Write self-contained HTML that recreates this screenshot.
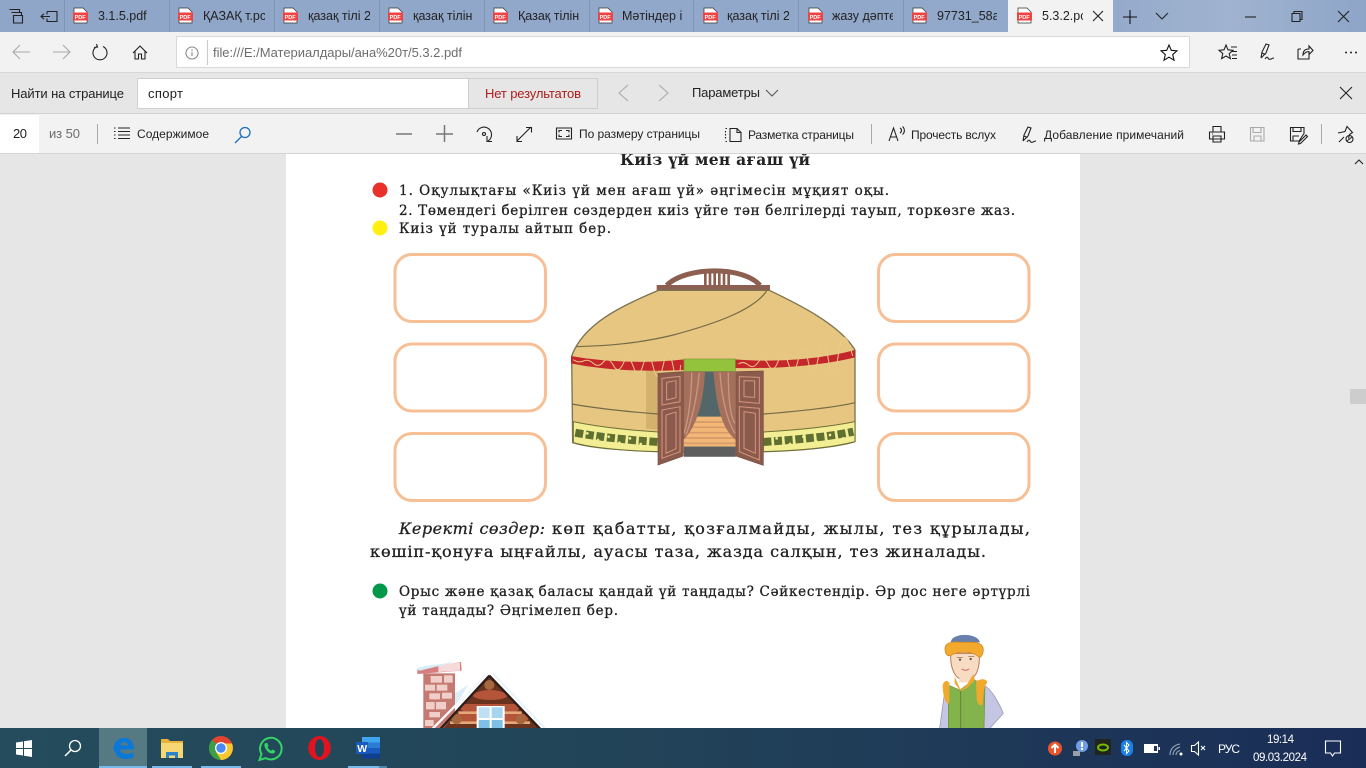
<!DOCTYPE html>
<html><head><meta charset="utf-8"><title>5.3.2.pdf</title>
<style>
html,body{margin:0;padding:0;width:1366px;height:768px;overflow:hidden;background:#e6e6e6}
svg{display:block;position:absolute;left:0;top:0}
.u{font-family:"Liberation Sans","DejaVu Sans",sans-serif;font-size:12px;fill:#222}
.f{font-size:13px}
.p{font-family:"DejaVu Serif","Liberation Serif",serif;font-size:13.5px;fill:#222;stroke:#222;stroke-width:.3}
.i{fill:none;stroke:#222;stroke-width:1.1}
</style></head><body>
<svg width="1366" height="768" viewBox="0 0 1366 768" xmlns="http://www.w3.org/2000/svg">
<defs>
<linearGradient id="tb" x1="0" x2="1"><stop offset="0" stop-color="#8fa6c9"/><stop offset=".8" stop-color="#93a9cb"/><stop offset=".9" stop-color="#a0b3d0"/><stop offset="1" stop-color="#8ea5c8"/></linearGradient>
<linearGradient id="task" x1="0" x2="1"><stop offset="0" stop-color="#244c5c"/><stop offset=".45" stop-color="#224458"/><stop offset="1" stop-color="#1a2d57"/></linearGradient>
<g id="pdf"><path d="M0 0h9l4 4v11H0z" fill="#fff" stroke="#333" stroke-width=".7"/><rect x="-1" y="4.500" width="15" height="8" fill="#ef4444"/><text x=".6" y="11" font-family="Liberation Sans,sans-serif" font-size="5.500" font-weight="bold" fill="#fff">PDF</text></g>
</defs>

<!-- page area -->
<rect x="0" y="153" width="1366" height="575" fill="#e6e6e6"/>
<rect x="286" y="153" width="794" height="575" fill="#fff"/>
<rect x="1350" y="389" width="16" height="15" fill="#cdcdcd"/>
<path d="M1355 164l4-4 4 4" class="i" stroke="#555"/>

<!-- tabs -->
<rect width="1366" height="32" fill="url(#tb)"/>
<g stroke="#7f95b8"><path d="M64.500 0v32M169.500 0v32M274.500 0v32M379.500 0v32M484.500 0v32M589.500 0v32M693.500 0v32M798.500 0v32M903.500 0v32"/></g>
<rect x="1008" width="105" height="32" fill="#f2f2f2"/>
<g class="i"><path d="M9.500 9.500h10v2.500M11.500 12.500h10v2.500M13.500 15.500h9v7.500h-9z"/><path d="M47 11.500h10v10h-10v-3M47 11.500v3M41 16.500h9M44 13.800l-3 2.700 3 2.700"/></g>
<use href="#pdf" x="74" y="8"/><use href="#pdf" x="179" y="8"/><use href="#pdf" x="284" y="8"/><use href="#pdf" x="389" y="8"/><use href="#pdf" x="494" y="8"/><use href="#pdf" x="599" y="8"/><use href="#pdf" x="704" y="8"/><use href="#pdf" x="809" y="8"/><use href="#pdf" x="913" y="8"/><use href="#pdf" x="1018" y="8"/>
<g class="u" style="font-size:12.500px">
<text x="98" y="20">3.1.5.pdf</text>
<svg x="203" y="0" width="62" height="32"><text y="20">ҚАЗАҚ т.рс</text></svg>
<svg x="308" y="0" width="62" height="32"><text y="20">қазақ тілі 2</text></svg>
<svg x="413" y="0" width="61" height="32"><text y="20">қазақ тілін</text></svg>
<svg x="518" y="0" width="61" height="32"><text y="20">Қазақ тілін</text></svg>
<svg x="622" y="0" width="62" height="32"><text y="20">Мәтіндер і</text></svg>
<svg x="727" y="0" width="62" height="32"><text y="20">қазақ тілі 2</text></svg>
<svg x="832" y="0" width="61" height="32"><text y="20">жазу дәпте</text></svg>
<svg x="937" y="0" width="60" height="32"><text y="20">97731_58а</text></svg>
<svg x="1042" y="0" width="41" height="32"><text y="20">5.3.2.рс</text></svg>
</g>
<g class="i"><path d="M1093 11l10 10M1103 11l-10 10"/><path d="M1123 17h14M1130 10v14" stroke="#111"/><path d="M1156 13l6 6 6-6"/><path d="M1245 17h11"/><path d="M1292 13.500h8v8h-8zM1294 13.500v-2h8v8h-2"/><path d="M1338 11l11 11M1349 11l-11 11"/></g>

<!-- address bar -->
<rect y="32" width="1366" height="41" fill="#f2f2f2"/>
<path d="M0 72.500h1366" stroke="#d6d6d6"/>
<rect x="176.500" y="36.500" width="1013" height="31" fill="#fff" stroke="#d8d8d8"/>
<g fill="none" stroke-width="1.100">
<path d="M13 52h17M20 45l-7 7 7 7M53 52h17M63 45l7 7-7 7" stroke="#a8a8a8"/>
<path d="M97 46.500a7 7 0 1 0 6 0M96.500 44l1 3-3.500 .5" stroke="#222"/>
<path d="M133 53l7-7 7 7M135 51v8h3.500v-5h3v5h3.500v-8" stroke="#222"/>
<circle cx="192" cy="53" r="6" stroke="#888"/><path d="M192 52v4M192 49.500v1.500" stroke="#888"/>
<path d="M207.500 40v25" stroke="#ccc"/>
<path d="M1169 45l2.300 5.300 5.700.5-4.300 3.800 1.300 5.600-5-3-5 3 1.300-5.600-4.300-3.800 5.700-.5z" stroke="#111"/>
<path d="M1226 45l2 4.800 5 .5-3.800 3.300 1.200 5-4.400-2.600-4.400 2.600 1.200-5-3.800-3.300 5-.5zM1231 47h6M1232 51.500h5M1232 55h5M1232 58.500h5" stroke="#222"/>
<path d="M1261 58L1262 52 1266 44 1269 45 1266 53 1261 58M1262 53l3.500 1.500M1265 59q2-3 3-1t3 1 3-1" stroke="#222"/>
<path d="M1298 49h3M1298 49v10h11v-5M1303 55c0-4 2-6 6-6v-3l4 4.500-4 4v-3c-2 0-4 1-6 3.500z" stroke="#222"/>
</g>
<g fill="#222"><circle cx="1346" cy="52.500" r="1"/><circle cx="1351" cy="52.500" r="1"/><circle cx="1356" cy="52.500" r="1"/></g>
<text class="u f" x="213" y="57" style="fill:#6d6d6d" textLength="249">file:///E:/Материалдары/ана%20т/5.3.2.pdf</text>

<!-- find bar -->
<rect y="73" width="1366" height="40" fill="#e6e6e6"/>
<path d="M0 113.500h1366" stroke="#d0d0d0"/>
<rect x="137.500" y="78.500" width="460" height="30" fill="#fff" stroke="#cfcfcf"/>
<rect x="468.500" y="78.500" width="129" height="30" fill="#e6e6e6" stroke="#cfcfcf"/>
<text class="u f" x="11" y="98" textLength="113">Найти на странице</text>
<text class="u f" x="148" y="98" textLength="35">спорт</text>
<text class="u f" x="485" y="98" style="fill:#b01c1c" textLength="96">Нет результатов</text>
<text class="u f" x="692" y="97" textLength="68">Параметры</text>
<g fill="none" stroke-width="1.100"><path d="M628 85l-9 8 9 8M659 85l9 8-9 8" stroke="#aaa"/><path d="M766 90l6 6 6-6" stroke="#555"/><path d="M1340 87l12 12M1352 87l-12 12" stroke="#222"/></g>

<!-- pdf bar -->
<rect y="114" width="1366" height="39" fill="#f2f2f2"/>
<path d="M0 153.500h1366" stroke="#d4d4d4"/>
<rect y="115" width="39" height="38" fill="#fff"/>
<text class="u f" x="13" y="138" textLength="14">20</text>
<text class="u f" x="49" y="138" style="fill:#6d6d6d" textLength="31">из 50</text>
<path d="M97.500 124v20M871.500 124v20M1321.500 124v20" stroke="#aaa"/>
<g class="i"><path d="M118 128h12M118 131.500h12M118 135h12M118 138.500h12M114 128h1.500M114 131.500h1.500M114 135h1.500M114 138.500h1.500"/></g>
<text class="u" x="137" y="138" textLength="72">Содержимое</text>
<circle cx="245" cy="132.500" r="5" fill="none" stroke="#1b6fc2" stroke-width="1.300"/><path d="M241.500 136.500l-6.500 6.500" stroke="#1b6fc2" stroke-width="1.300"/>
<path d="M396 134h16M436 134h17M444.500 125v17" stroke="#777" stroke-width="1.500" fill="none"/>
<g class="i">
<path d="M477 132a7.500 7.500 0 1 1 11 9M487 136v5.500h5"/><circle cx="484" cy="134" r="1.500"/>
<path d="M517 141l14-14M517 136v5.500h5M526 127.500h5.500v5"/>
<path d="M556.500 128h15v11h-15z"/><path d="M559 132.500v-2h3M566 130.500h3v2M569 134.500v2h-3M562 136.500h-3v-2"/>
<path d="M730 128.500h7l4 4v9h-11zM737 128.500v4h4"/><path d="M725.500 128.500h2M725.500 141.500h2M725.500 131v9" stroke-dasharray="1.500 1.500"/>
<path d="M889 141l4.500-13 4.500 13M891 137h5M900 128c2 1 2 4 0 5M902.500 126.500c2.500 2 2.500 6 0 8"/>
<path d="M1023 141L1024 135 1028 127 1031 128 1028 136 1023 141M1024 136l3.500 1.500M1027 142q2-3 3-1t3 1 3-1"/>
<path d="M1209.500 132h15v7h-15zM1213 132v-5.500h8v5.500M1213 136h8v6h-8zM1212 134h1"/>
<g stroke="#aaa"><path d="M1250.500 127.500h13.500v13.500h-13.500zM1253 127.500v5h8v-5M1254 141v-5h7v5"/></g>
<path d="M1290.500 127.500h13.500v6l-5 7.500h-8.500zM1293 127.500v4h8v-4M1293 141v-5h6M1299 142l7-7 1.500 1.500-7 7-2 .5z"/>
<path d="M1339 142l5-5M1338 133l7-1.500 2-5 5.500 6-3 2-1 4"/><circle cx="1349.500" cy="139" r="3.500"/><path d="M1347 141l5-4"/>
</g>
<g class="u">
<text x="579" y="138" textLength="121">По размеру страницы</text>
<text x="748" y="139" textLength="106">Разметка страницы</text>
<text x="911" y="139" textLength="85">Прочесть вслух</text>
<text x="1044" y="139" textLength="140">Добавление примечаний</text>
</g>

<!-- document text -->
<svg x="0" y="154" width="1366" height="574" viewBox="0 154 1366 574">
<text class="p" x="620" y="165" style="font-size:15.500px;font-weight:bold;stroke-width:0" textLength="190">Киіз үй мен ағаш үй</text>
<text class="p" x="399" y="195" textLength="490">1. Оқулықтағы «Киіз үй мен ағаш үй» әңгімесін мұқият оқы.</text>
<text class="p" x="399" y="215" textLength="616">2. Төмендегі берілген сөздерден киіз үйге тән белгілерді тауып, торкөзге жаз.</text>
<text class="p" x="399" y="233" textLength="212">Киіз үй туралы айтып бер.</text>
<text class="p" x="399" y="534" style="font-size:16px;font-style:italic;" textLength="146">Керекті сөздер:</text>
<text class="p" x="552" y="534" style="font-size:16px" textLength="478">көп қабатты, қозғалмайды, жылы, тез құрылады,</text>
<text class="p" x="370" y="557" style="font-size:16px" textLength="616">көшіп-қонуға ыңғайлы, ауасы таза, жазда салқын, тез жиналады.</text>
<text class="p" x="399" y="596" textLength="631">Орыс және қазақ баласы қандай үй таңдады? Сәйкестендір. Әр дос неге әртүрлі</text>
<text class="p" x="399" y="615" textLength="219">үй таңдады? Әңгімелеп бер.</text>
<circle cx="380" cy="190" r="7.500" fill="#e8312a"/>
<circle cx="380" cy="228" r="7.500" fill="#fff012"/>
<circle cx="380" cy="591" r="7.500" fill="#00994a"/>
<g fill="none" stroke="#f6bf95" stroke-width="3">
<rect x="395" y="254.500" width="150.500" height="67" rx="17"/>
<rect x="395" y="344" width="150.500" height="67" rx="17"/>
<rect x="395" y="433.500" width="150.500" height="67" rx="17"/>
<rect x="878.500" y="254.500" width="150.500" height="67" rx="17"/>
<rect x="878.500" y="344" width="150.500" height="67" rx="17"/>
<rect x="878.500" y="433.500" width="150.500" height="67" rx="17"/>
</g>

<!-- yurt -->
<svg x="560" y="260" width="310" height="215" viewBox="0 0 930 645">
<path d="M320 76C380 18 550 18 600 76" fill="none" stroke="#8d5f50" stroke-width="15"/>
<g stroke="#8d5f50" stroke-width="8"><path d="M436 34v44M450 30v48M464 30v48M478 30v48M492 32v46M506 36v42"/></g>
<rect x="290" y="75" width="340" height="16" fill="#8d5f50"/>
<path d="M295 91C190 135 70 190 35 288L38 548C90 565 200 572 300 575H610C720 572 830 562 885 545V270C840 195 720 135 628 91Z" fill="#e6c680" stroke="#7c7350" stroke-width="4"/>
<path d="M258 330H295V510L258 505Z" fill="#d4b26e"/>
<path d="M620 93C580 150 470 190 340 225 230 252 130 258 48 260" fill="none" stroke="#736b48" stroke-width="3.500"/>
<path d="M35 432C110 445 200 455 295 462M610 462C700 455 810 445 885 428" fill="none" stroke="#736b48" stroke-width="3.500"/>
<!-- lower band -->
<path d="M40 485C110 500 200 510 295 516V575C190 572 100 565 40 548Z" fill="#f3ee94" stroke="#6e7236" stroke-width="3"/>
<path d="M610 516C720 510 810 500 885 485V545C820 562 720 572 610 575Z" fill="#f3ee94" stroke="#6e7236" stroke-width="3"/>
<g fill="none" stroke="#5f7030" stroke-width="24" stroke-dasharray="24 8"><path d="M46 518C110 530 200 540 295 546"/><path d="M610 546C720 538 810 530 880 515"/></g>
<g fill="#f3ee94"><circle cx="82" cy="520" r="4"/><circle cx="114" cy="540" r="4"/><circle cx="146" cy="530" r="4"/><circle cx="178" cy="548" r="4"/><circle cx="210" cy="535" r="4"/><circle cx="242" cy="552" r="4"/><circle cx="650" cy="535" r="4"/><circle cx="690" cy="552" r="4"/><circle cx="730" cy="530" r="4"/><circle cx="770" cy="545" r="4"/><circle cx="810" cy="525" r="4"/><circle cx="850" cy="535" r="4"/></g>
<!-- red band -->
<path d="M33 288C130 305 250 312 372 298V330C250 336 130 330 33 310Z" fill="#c4262b"/>
<path d="M526 298C650 308 780 298 885 270V292C780 318 650 326 526 324Z" fill="#c4262b"/>
<g fill="none" stroke="#eac985" stroke-width="3"><path d="M40 299Q55 310 70 303T100 310T130 306T160 316T190 310T220 320T250 313T280 322T310 314T340 322T362 315"/><path d="M535 312Q550 302 565 315T595 306T625 314T655 302T685 310T715 298T745 306T775 292T805 298T835 284T878 288"/></g>
<rect x="372" y="297" width="154" height="37" fill="#93c23c" stroke="#7c9a3a" stroke-width="2"/>
<!-- opening -->
<rect x="372" y="335" width="155" height="255" fill="#53676a"/>
<path d="M372 470H527V560H372Z" fill="#f2b777"/>
<g stroke="#d79a68" stroke-width="5"><path d="M372 486H527M372 502H527M372 518H527M372 534H527M372 550H527"/></g>
<rect x="372" y="560" width="155" height="30" fill="#5e5e5e"/>
<path d="M370 335H435C430 430 410 500 370 540Z" fill="#a4705c"/>
<path d="M527 335H460C470 430 480 500 527 540Z" fill="#a4705c"/>
<g fill="none" stroke="#c99680" stroke-width="4"><path d="M395 338C395 410 385 480 372 520M418 338C410 420 395 480 378 525M480 338C485 410 500 480 525 520M505 338C505 410 510 470 525 490"/></g>
<!-- doors -->
<path d="M294 340L370 335V588L294 615Z" fill="#8a5b4c" stroke="#7a5042" stroke-width="2"/>
<path d="M528 335L610 333V616L528 588Z" fill="#8a5b4c" stroke="#7a5042" stroke-width="2"/>
<g fill="none" stroke="#d6957e" stroke-width="3"><path d="M306 355L360 349V425L306 435ZM320 367L348 362V413L320 420ZM306 450L360 440V575L306 595ZM318 465L348 456V566L318 580Z"/><path d="M538 350L598 352V430L538 425ZM552 362L584 363V412L552 410ZM538 440L598 445V600L538 575ZM552 455L586 460V580L552 565Z"/></g>
</svg>

<!-- house -->
<svg x="400" y="630" width="160" height="100" viewBox="0 0 480 300">
<path d="M70 130H165V300H70Z" fill="#c47a70"/>
<g fill="#f0cfcb"><rect x="92" y="138" width="34" height="20"/><rect x="132" y="136" width="26" height="22"/><rect x="75" y="164" width="30" height="18"/><rect x="110" y="164" width="32" height="18"/><rect x="88" y="190" width="32" height="18"/><rect x="126" y="188" width="30" height="18"/><rect x="78" y="216" width="26" height="22"/><rect x="108" y="216" width="30" height="22"/><rect x="88" y="246" width="32" height="16"/><rect x="75" y="270" width="26" height="18"/></g>
<path d="M52 118L183 96 185 122 52 132Z" fill="#d77f80"/><path d="M115 105L180 98V122L115 126Z" fill="#f6d9d9"/>
<path d="M46 118C80 100 130 108 165 92L150 100 60 122Z" fill="#d6ecf7"/>
<path d="M165 190L205 165 165 230Z" fill="#dbeef8"/>
<path d="M268 135L130 295H415Z" fill="#6a3320"/>
<g fill="#b4553a"><path d="M218 195C240 175 300 175 322 195 325 215 220 215 218 195Z"/><rect x="182" y="222" width="175" height="22" rx="10"/><rect x="155" y="252" width="230" height="22" rx="10"/></g>
<g fill="#e6a878"><rect x="175" y="244" width="190" height="8"/><rect x="150" y="274" width="240" height="8"/></g>
<circle cx="268" cy="165" r="15" fill="#a8683f"/><circle cx="170" cy="268" r="15" fill="#a8683f"/><circle cx="362" cy="268" r="15" fill="#a8683f"/>
<rect x="230" y="228" width="84" height="72" fill="#fff"/>
<rect x="236" y="232" width="33" height="32" fill="#bfe0f3"/><rect x="275" y="232" width="33" height="32" fill="#a5d5ef"/><rect x="236" y="270" width="33" height="30" fill="#7fc1e6"/><rect x="275" y="270" width="33" height="30" fill="#7fc1e6"/>
<path d="M268 137L122 296M268 137L420 296" stroke="#2c1d1a" stroke-width="7" fill="none"/>
<path d="M262 130L98 296" stroke="#f4f9fd" stroke-width="7" fill="none"/>
<path d="M278 130L436 296" stroke="#e8f3fa" stroke-width="6" fill="none"/>
</svg>

<!-- boy -->
<svg x="920" y="625" width="100" height="105" viewBox="0 0 300 315">
<path d="M72 215L58 315H95V215Z" fill="#c5c6e4" stroke="#8e8eb0" stroke-width="2"/>
<path d="M190 180C215 190 240 240 250 265L205 315H180V190Z" fill="#c5c6e4" stroke="#8e8eb0" stroke-width="2"/>
<path d="M85 180L120 195 160 165 195 175 192 315H85Z" fill="#85b34b" stroke="#6c8f3d" stroke-width="2"/>
<path d="M122 198V315" stroke="#63813a" stroke-width="3"/>
<path d="M68 180C72 165 85 165 88 175L88 235C78 240 68 215 68 180Z" fill="#f0a92d"/>
<path d="M168 170C180 160 200 160 202 172 190 185 190 215 188 238 178 245 172 235 170 220Z" fill="#f0a92d"/>
<path d="M92 85C90 130 105 165 135 165 170 165 180 130 178 85Z" fill="#f7dbc3" stroke="#b97a58" stroke-width="3"/>
<path d="M118 145V172H160V145Z" fill="#f7dbc3"/>
<path d="M104 155L122 195 140 180 160 148 165 165 140 190 122 198 104 175Z" fill="#f0a92d"/>
<path d="M92 52C95 22 172 22 180 52Z" fill="#6a80ac"/>
<path d="M75 68C78 48 105 50 135 52 165 50 188 52 190 72 190 90 182 100 176 96 160 78 110 78 92 92 80 95 74 85 75 68Z" fill="#f3a92d" stroke="#c78320" stroke-width="2"/>
<path d="M110 97h18M145 95h18" stroke="#8a5d48" stroke-width="2"/><circle cx="120" cy="104" r="3.500" fill="#555"/><circle cx="152" cy="102" r="3.500" fill="#555"/>
<path d="M125 132c8 5 15 5 22 0" stroke="#c75f55" stroke-width="3" fill="none"/>
</svg>
</svg>

<!-- taskbar -->
<rect y="728" width="1366" height="40" fill="url(#task)"/>
<rect x="99" y="728" width="48" height="40" fill="#567a84"/>
<g fill="#76b9ed"><rect x="99" y="766" width="48" height="2"/><rect x="152" y="766" width="40" height="2"/><rect x="201" y="766" width="40" height="2"/><rect x="348" y="766" width="31" height="2"/></g><rect x="379" y="766" width="8" height="2" fill="#4c86a8"/>
<g fill="#fff"><path d="M16 742.500l7-1v6.500h-7zM24 741.300l8-1.300v8h-8zM16 749h7v6.500l-7-1zM24 749h8v8l-8-1.300z"/></g>
<circle cx="75" cy="746" r="5.500" fill="none" stroke="#fff" stroke-width="1.300"/><path d="M71 750l-6 6" stroke="#fff" stroke-width="1.500"/>
<!-- edge -->
<path d="M113.500 749c0-7 5-11 10.500-11 6.500 0 10 4.500 10 11.500h-14c.5 3 3 4.500 6 4.500 2.500 0 5.500-.6 7.500-1.800v5.300c-2 1-4.500 1.500-8 1.500-5 0-9-2.500-10-6.500-.8-2-2-1.500-2-3.500zm7-3.500h7.500c0-2-1.500-3.500-3.700-3.500s-3.800 1.500-3.800 3.500z" fill="#0a78d8"/>
<!-- explorer -->
<path d="M161 739h7l2 2h13v3h-22z" fill="#e8b33d"/><rect x="161" y="743" width="22" height="15" fill="#f7d774"/><path d="M166 758v-6h12v6h-3v-2.500h-6v2.500z" fill="#2b84c6"/>
<!-- chrome -->
<circle cx="221" cy="748" r="12" fill="#e2452f"/><path d="M221 748L210.600 754A12 12 0 0 0 221 760L227 749.500z" fill="#3a9f47"/><path d="M210.600 754A12 12 0 0 1 212 740L221 748z" fill="#3a9f47"/><path d="M221 760A12 12 0 0 0 232 743.500H221L216 752z" fill="#f7c92e"/><circle cx="221" cy="748" r="6" fill="#fff"/><circle cx="221" cy="748" r="4.700" fill="#4a8af0"/>
<!-- whatsapp -->
<path d="M259.500 760l2-6a10.800 10.800 0 1 1 4.200 4.100z" fill="none" stroke="#35d366" stroke-width="2"/><path d="M265.500 743c-1.500 1-1.500 3 0 5.500 2 3.500 4.500 5 7 5 1.500 0 2.700-1 2.700-2.500l-2.700-1.500-1.300 1.300c-1.500-.5-3-2-3.700-3.800l1-1.300-1.300-2.700z" fill="#35d366"/>
<!-- opera -->
<ellipse cx="319.500" cy="748" rx="11.300" ry="12" fill="#e0131f"/><ellipse cx="319.500" cy="748" rx="4.500" ry="9" fill="#1f4456"/>
<!-- word -->
<rect x="362" y="737" width="18" height="5.500" fill="#41a5ee"/><rect x="362" y="742.500" width="18" height="5.500" fill="#2b7cd3"/><rect x="362" y="748" width="18" height="5.500" fill="#185abd"/><rect x="362" y="753.500" width="18" height="5" fill="#103f91"/><rect x="356" y="742" width="12" height="12" fill="#185abd"/><text x="357.200" y="752" font-family="Liberation Sans,sans-serif" font-size="10.500" font-weight="bold" fill="#fff">W</text>
<!-- tray -->
<circle cx="1055" cy="748.500" r="7" fill="#e9542a"/><path d="M1055 753v-8M1051.500 748l3.500-3.500 3.500 3.500" stroke="#fff" stroke-width="2" fill="none"/>
<circle cx="1082" cy="746" r="6" fill="#6f9fe8"/><rect x="1081" y="742" width="2" height="5" fill="#fff"/><rect x="1081" y="748" width="2" height="2" fill="#fff"/><rect x="1073" y="751" width="7" height="5" fill="#9aa0a8"/>
<rect x="1095" y="739" width="16" height="16" fill="#20241c"/><ellipse cx="1103" cy="747.500" rx="5" ry="3" fill="none" stroke="#76b900" stroke-width="2"/>
<rect x="1121" y="740" width="12" height="16" rx="5.500" fill="#1a80e8"/><path d="M1124 745l5 6-2.500 2.500v-11l2.500 2.500-5 6" stroke="#fff" fill="none"/>
<rect x="1144.500" y="744.500" width="13" height="8" fill="#fff" stroke="#fff"/><rect x="1154" y="746" width="3" height="5" fill="#1d3358"/><rect x="1158.500" y="747" width="1.500" height="3" fill="#fff"/>
<g fill="none" stroke="#9aa7b8" stroke-width="1.100"><path d="M1170 755c0-6 4-10 10-11M1173 755c0-4 3-7 7-8M1176 755c0-2 1.500-4 4-4.500"/></g><circle cx="1181" cy="754" r="1.500" fill="#fff"/>
<path d="M1191.500 745.500h3l4-3.500v13l-4-3.500h-3zM1201 746l4 4M1205 746l-4 4" fill="none" stroke="#fff" stroke-width="1.100"/>
<text x="1218" y="753" font-family="Liberation Sans,sans-serif" font-size="12" fill="#fff" textLength="22">РУС</text>
<text x="1267" y="743" font-family="Liberation Sans,sans-serif" font-size="11.500" fill="#fff" textLength="27">19:14</text>
<text x="1253" y="761" font-family="Liberation Sans,sans-serif" font-size="11.500" fill="#fff" textLength="54">09.03.2024</text>
<path d="M1325.500 741h15v12h-6l-2 3-2-3h-5z" fill="none" stroke="#fff" stroke-width="1.100"/>
</svg>
</body></html>
